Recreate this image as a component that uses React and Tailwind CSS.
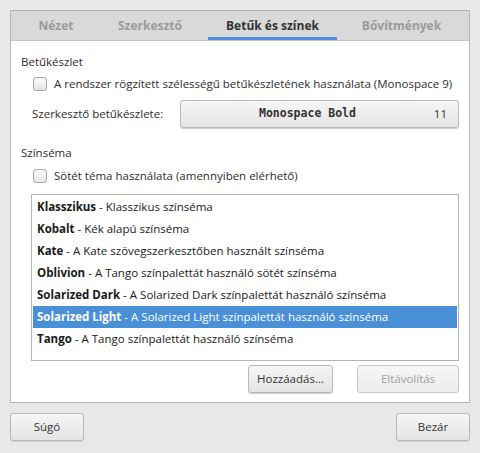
export default function App() {
  const schemes = [
    ["Klasszikus", "Klasszikus színséma"],
    ["Kobalt", "Kék alapú színséma"],
    ["Kate", "A Kate szövegszerkesztőben használt színséma"],
    ["Oblivion", "A Tango színpalettát használó sötét színséma"],
    ["Solarized Dark", "A Solarized Dark színpalettát használó színséma"],
    ["Solarized Light", "A Solarized Light színpalettát használó színséma"],
    ["Tango", "A Tango színpalettát használó színséma"],
  ];
  const selected = 5;
  const btnBase =
    "h-[28px] rounded-[3px] border border-[#b8b8b8] bg-gradient-to-b from-[#f6f6f6] to-[#e4e4e4] text-[11.5px] text-[#333] flex items-center shadow-[0_1px_0_#d0d0d0]";
  const btn = btnBase + " justify-center";
  const Check = () => (
    <div className="w-[14px] h-[14px] rounded-[3px] border border-[#a8a8a8] bg-gradient-to-b from-[#fafafa] to-[#e6e6e6] shrink-0" />
  );
  return (
    <div
      className="w-[480px] h-[453px] bg-[#e8e8e8] text-[#2e2e2e] text-[11.5px] px-[10px] pt-[10px]"
      style={{ fontFamily: '"Open Sans", "Noto Sans", sans-serif' }}
    >
      <div className="h-[393px] border border-[#b5b5b5] bg-white flex flex-col">
        <div className="h-[30px] bg-[#d9d9d9] border-b border-[#c4c4c4] flex items-stretch font-bold text-[#9a9a9a] pl-[9px] gap-[8px] text-[12px]">
          <div className="w-[72px] flex items-center justify-center">Nézet</div>
          <div className="w-[100px] flex items-center justify-center">Szerkesztő</div>
          <div className="w-[129px] flex items-center justify-center text-[#333] border-b-[3px] border-[#4a90d9] pt-[3px]">
            Betűk és színek
          </div>
          <div className="w-[113px] flex items-center justify-center">Bővítmények</div>
        </div>
        <div className="flex flex-col px-[10px] pt-[12px]">
          <div className="h-[18px] leading-[18px]">Betűkészlet</div>
          <div className="flex items-center gap-[7px] pl-[12px] mt-[4px] h-[18px] whitespace-nowrap">
            <Check />
            <span>A rendszer rögzített szélességű betűkészletének használata (Monospace 9)</span>
          </div>
          <div className="flex items-center mt-[7px] pl-[11px]">
            <span className="w-[148px] shrink-0">Szerkesztő betűkészlete:</span>
            <div className={btnBase + " flex-1 pr-[11px] pl-[78px]"}>
              <span
                className="text-[11.5px] font-bold"
                style={{ fontFamily: '"DejaVu Sans Mono", monospace' }}
              >
                Monospace Bold
              </span>
              <div className="flex-1" />
              <span>11</span>
            </div>
          </div>
          <div className="h-[18px] leading-[18px] mt-[16px]">Színséma</div>
          <div className="flex items-center gap-[7px] pl-[12px] mt-[5px] h-[18px]">
            <Check />
            <span>Sötét téma használata (amennyiben elérhető)</span>
          </div>
          <div className="mt-[9px] ml-[10px] h-[167px] border border-[#b5b5b5] pt-[1px] px-[1px] flex flex-col">
            {schemes.map(([name, desc], i) => (
              <div
                key={name}
                className={
                  "h-[22px] flex items-center px-[4px] whitespace-nowrap " +
                  (i === selected ? "bg-[#4a90d9] text-white" : "text-[#1a1a1a]")
                }
              >
                <span className="font-bold">{name}</span>
                <span>&nbsp;- {desc}</span>
              </div>
            ))}
          </div>
          <div className="flex justify-end gap-[24px] mt-[4px]">
            <div className={btn + " w-[85px]"}>Hozzáadás...</div>
            <div className={btn + " w-[102px] text-[#a0a0a0] from-[#f4f4f4] to-[#ececec] border-[#c8c8c8] shadow-none"}>
              Eltávolítás
            </div>
          </div>
        </div>
      </div>
      <div className="flex justify-between mt-[10px]">
        <div className={btn + " w-[74px]"}>Súgó</div>
        <div className={btn + " w-[74px]"}>Bezár</div>
      </div>
    </div>
  );
}
